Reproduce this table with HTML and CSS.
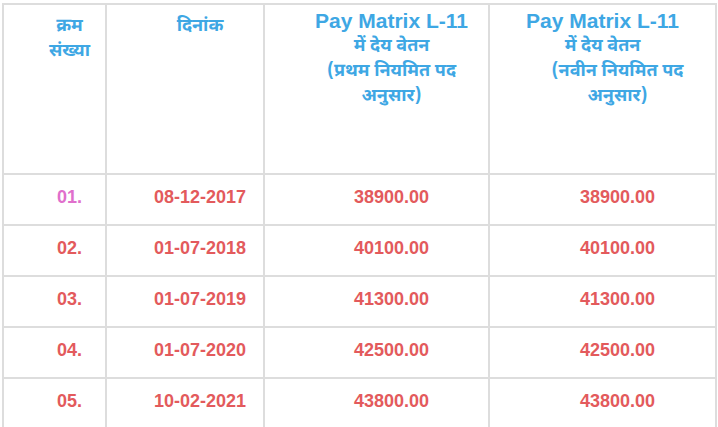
FILE: index.html
```html
<!DOCTYPE html>
<html lang="hi">
<head>
<meta charset="utf-8">
<title>Pay Matrix L-11</title>
<link rel="stylesheet" href="styles.css">
</head>
<body>
<table class="pay-table">
  <colgroup>
    <col class="c1"><col class="c2"><col class="c3"><col class="c4">
  </colgroup>
  <thead>
    <tr>
      <th class="h-cell h-low"><div class="hi">क्रम<br>संख्या</div></th>
      <th class="h-cell h-low"><div class="hi">दिनांक</div></th>
      <th class="h-cell">
        <div class="en">Pay Matrix L-11</div>
        <div class="hi">में देय वेतन</div>
        <div class="hi">(प्रथम नियमित पद<br>अनुसार)</div>
      </th>
      <th class="h-cell">
        <div class="en shift">Pay Matrix L-11</div>
        <div class="hi shift">में देय वेतन</div>
        <div class="hi">(नवीन नियमित पद<br>अनुसार)</div>
      </th>
    </tr>
  </thead>
  <tbody>
    <tr><td class="pink">01.</td><td>08-12-2017</td><td>38900.00</td><td>38900.00</td></tr>
    <tr><td>02.</td><td>01-07-2018</td><td>40100.00</td><td>40100.00</td></tr>
    <tr><td>03.</td><td>01-07-2019</td><td>41300.00</td><td>41300.00</td></tr>
    <tr><td>04.</td><td>01-07-2020</td><td>42500.00</td><td>42500.00</td></tr>
    <tr><td>05.</td><td>10-02-2021</td><td>43800.00</td><td>43800.00</td></tr>
  </tbody>
</table>
</body>
</html>
```
FILE: styles.css
```css
html, body {
  margin: 0;
  padding: 0;
  background: #ffffff;
}
body {
  font-family: "Liberation Sans", Arial, "Noto Sans Devanagari", "Noto Sans", sans-serif;
}
.pay-table {
  border-collapse: collapse;
  margin: 3px 0 0 2px;
  width: 715px;
  table-layout: fixed;
}
.c1 { width: 103px; }
.c2 { width: 158px; }
.c3 { width: 225px; }
.c4 { width: 227px; }
.pay-table th,
.pay-table td {
  border: 2px solid #dddddd;
  padding: 0 0 0 30px;
  text-align: center;
}
.pay-table th.h-cell {
  height: 165px;
  vertical-align: top;
  padding-top: 3px;
  color: #3ea7e4;
  font-weight: bold;
}
.pay-table th.h-low {
  padding-top: 9px;
  height: 159px;
}
.en {
  font-size: 21px;
  line-height: 26px;
}
.hi {
  font-family: "Noto Sans Devanagari", "Noto Sans", "Liberation Sans", sans-serif;
  font-size: 18px;
  line-height: 25px;
}
.shift {
  margin-left: -30px;
}
.pay-table td {
  height: 45px;
  vertical-align: middle;
  padding-bottom: 4px;
  font-size: 18px;
  font-weight: bold;
  color: #e35a5c;
}
.pay-table td.pink {
  color: #e06fcc;
}
```
